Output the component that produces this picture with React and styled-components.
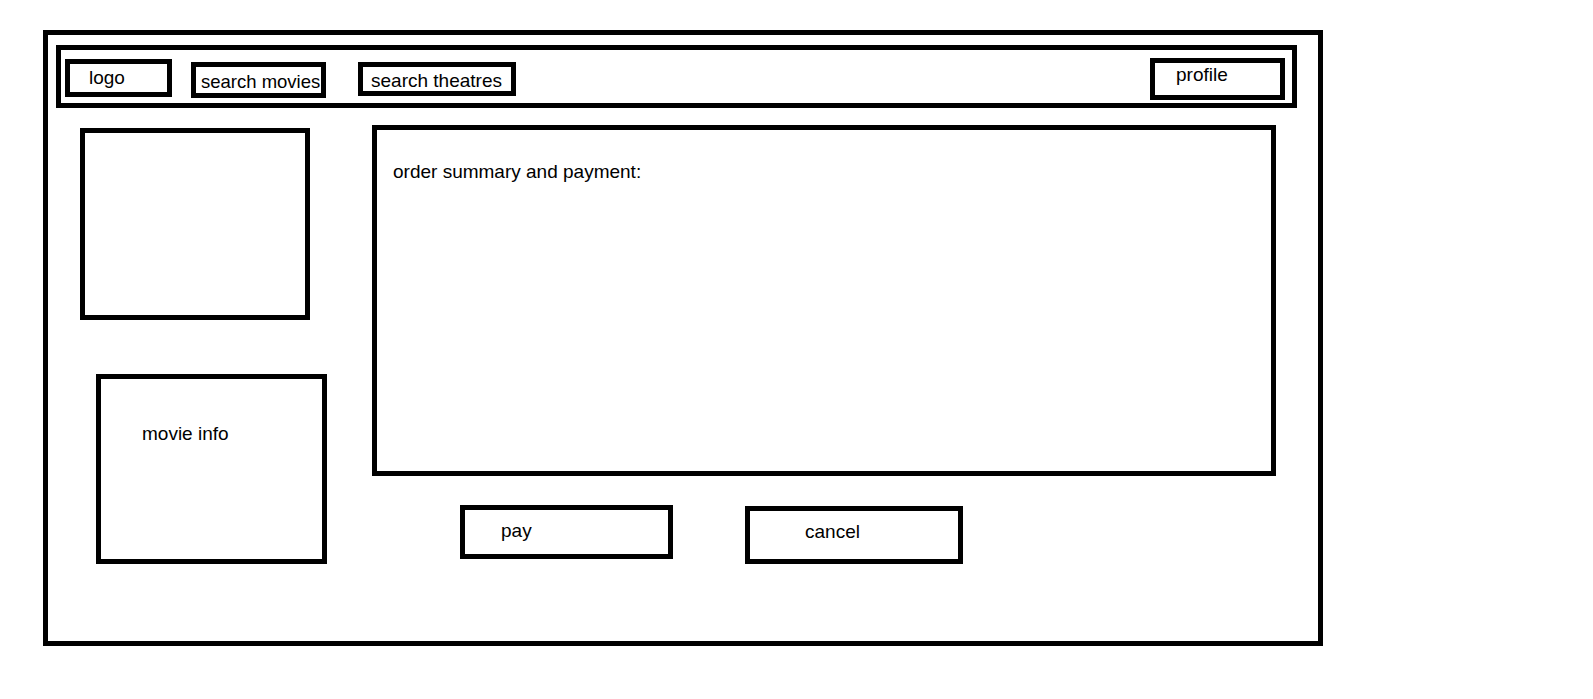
import { createGlobalStyle, styled } from "styled-components";

const GlobalStyle = createGlobalStyle`
  body {
    margin: 0;
    background: #fff;
    font-family: "Liberation Sans", Arial, sans-serif;
    color: #000;
  }
`;

export default function App() {
  return (
    <>
      <GlobalStyle />
      <Page>
        <Frame>
          <Header>
            <NavBox $w={107} $h={38} $top={9} $ml={4} $pl={19} $pt={3}>logo</NavBox>
            <NavBox $w={135} $h={36} $top={12} $ml={19} $pl={5} $pt={4} $size={18.5}>search movies</NavBox>
            <NavBox $w={158} $h={34} $top={12} $ml={32} $pl={8} $pt={3}>search theatres</NavBox>
            <NavBox $w={135} $h={42} $top={8} $ml="auto" $pl={21} $pt={1}>profile</NavBox>
          </Header>
          <Content>
            <LeftColumn>
              <Poster />
              <InfoBox>movie info</InfoBox>
            </LeftColumn>
            <RightColumn>
              <SummaryBox>order summary and payment:</SummaryBox>
              <ButtonRow>
                <ActionButton $w={213} $h={54} $top={0} $pl={36} $pt={10}>pay</ActionButton>
                <ActionButton $w={218} $h={58} $top={1} $pl={55} $pt={10}>cancel</ActionButton>
              </ButtonRow>
            </RightColumn>
          </Content>
        </Frame>
      </Page>
    </>
  );
}

const Page = styled.div`
  padding: 30px 0 0 43px;
`;

const Frame = styled.div`
  box-sizing: border-box;
  width: 1280px;
  height: 616px;
  border: 5px solid #000;
`;

const Header = styled.div`
  box-sizing: border-box;
  display: flex;
  align-items: flex-start;
  width: 1241px;
  height: 63px;
  margin: 10px 0 0 8px;
  border: 5px solid #000;
`;

const NavBox = styled.div`
  box-sizing: border-box;
  width: ${(p) => p.$w}px;
  height: ${(p) => p.$h}px;
  margin-top: ${(p) => p.$top}px;
  margin-left: ${(p) => (p.$ml === "auto" ? "auto" : `${p.$ml}px`)};
  margin-right: ${(p) => (p.$ml === "auto" ? "7px" : "0")};
  padding: ${(p) => p.$pt}px 0 0 ${(p) => p.$pl}px;
  border: 5px solid #000;
  font-size: ${(p) => p.$size || 19}px;
  line-height: 22px;
  white-space: nowrap;
`;

const Content = styled.div`
  display: flex;
  align-items: flex-start;
`;

const LeftColumn = styled.div`
  display: flex;
  flex-direction: column;
  margin: 20px 0 0 32px;
  width: 247px;
`;

const Poster = styled.div`
  box-sizing: border-box;
  width: 230px;
  height: 192px;
  border: 5px solid #000;
`;

const InfoBox = styled.div`
  box-sizing: border-box;
  width: 231px;
  height: 190px;
  margin: 54px 0 0 16px;
  padding: 44px 0 0 41px;
  border: 5px solid #000;
  font-size: 19px;
  line-height: 22px;
`;

const RightColumn = styled.div`
  display: flex;
  flex-direction: column;
  margin: 17px 0 0 45px;
`;

const SummaryBox = styled.div`
  box-sizing: border-box;
  width: 904px;
  height: 351px;
  padding: 31px 0 0 16px;
  border: 5px solid #000;
  font-size: 19px;
  line-height: 22px;
`;

const ButtonRow = styled.div`
  display: flex;
  align-items: flex-start;
  gap: 72px;
  margin: 29px 0 0 88px;
`;

const ActionButton = styled.div`
  box-sizing: border-box;
  width: ${(p) => p.$w}px;
  height: ${(p) => p.$h}px;
  margin-top: ${(p) => p.$top}px;
  padding: ${(p) => p.$pt}px 0 0 ${(p) => p.$pl}px;
  border: 5px solid #000;
  font-size: 19px;
  line-height: 22px;
`;
